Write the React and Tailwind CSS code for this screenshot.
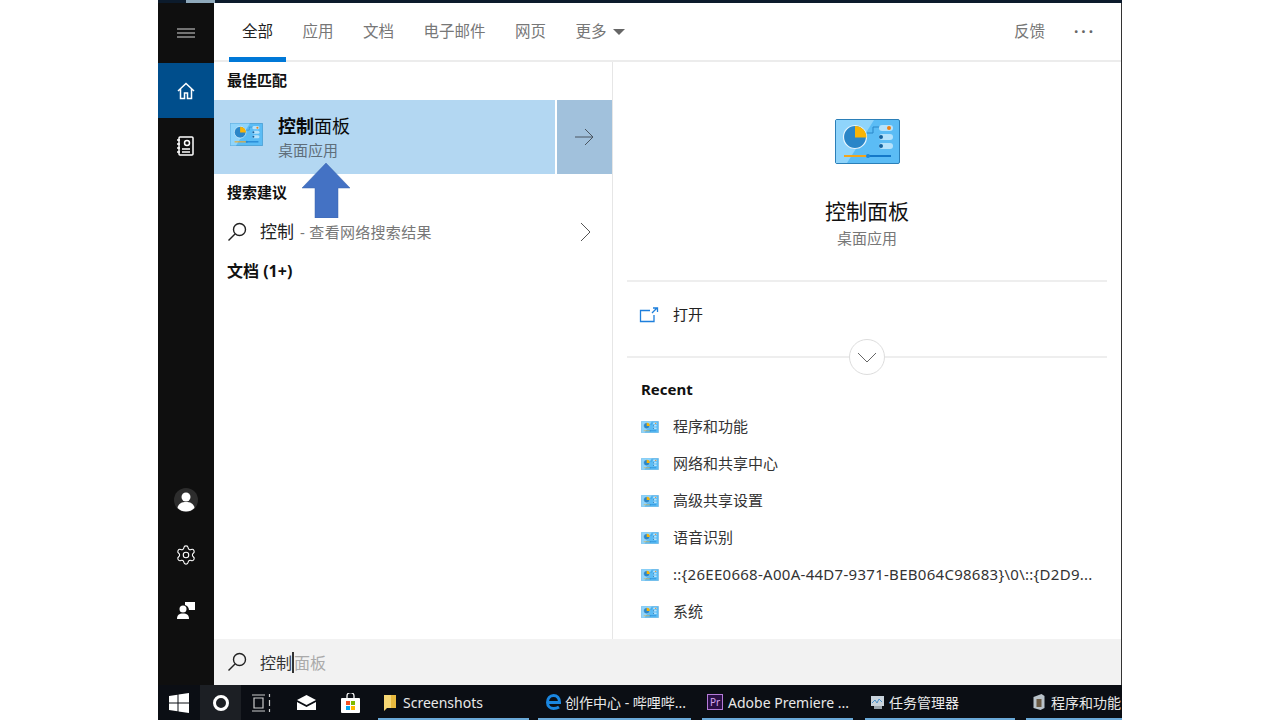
import { Settings } from "lucide-react";

const FONT = "[font-family:'Noto_Sans','Noto_Sans_CJK_SC',sans-serif]";

const tabs = ["全部", "应用", "文档", "电子邮件", "网页"];

const recent = [
  "程序和功能",
  "网络和共享中心",
  "高级共享设置",
  "语音识别",
  "::{26EE0668-A00A-44D7-9371-BEB064C98683}\\0\\::{D2D9...",
  "系统",
];

function PanelIcon({ className }) {
  return (
    <svg className={className} viewBox="0 0 65 45">
      <rect x="0.5" y="0.5" width="64" height="44" rx="1.5" fill="#5bbcf5" stroke="#2b7fb8" />
      <path d="M1 1h38L12 44H1z" fill="#8fd4fb" />
      <circle cx="20" cy="18" r="11.5" fill="#2a86c8" stroke="#e6f5fd" strokeWidth="1.2" />
      <path d="M20 7a11.5 11.5 0 0 1 11.5 11.5H20z" fill="#f8b406" />
      <path d="M32 14h6v-6h7" fill="none" stroke="#2a86c8" />
      <rect x="44" y="6" width="14" height="6" rx="3" fill="#b6e2fb" />
      <rect x="44" y="15" width="14" height="6" rx="3" fill="#b6e2fb" />
      <rect x="44" y="24" width="14" height="6" rx="3" fill="#b6e2fb" />
      <circle cx="54" cy="9" r="2" fill="#f07f12" />
      <circle cx="46" cy="18" r="2" fill="#14609c" />
      <circle cx="46" cy="27" r="2" fill="#14609c" />
      <rect x="9" y="36" width="24" height="2" fill="#f2a51c" />
      <rect x="33" y="36" width="23" height="2" fill="#1478c8" />
      <circle cx="33" cy="37" r="2" fill="#1f8ad8" />
    </svg>
  );
}

function SearchIcon() {
  return (
    <svg className="w-[20px] h-[20px] text-[#222]" viewBox="0 0 20 20" fill="none" stroke="currentColor" strokeWidth="1.4">
      <circle cx="12.5" cy="7.5" r="6" />
      <path d="M8 12 1.5 18.5" />
    </svg>
  );
}

function TaskItem({ width, icon, label, gap }) {
  return (
    <div className={`${width} ${gap} h-full flex items-center pl-[5px] pt-[1px] border-b-2 border-[#6aa9d8] text-[14px] text-[#e8e8e8] whitespace-nowrap overflow-hidden`}>
      {icon}
      <span>{label}</span>
    </div>
  );
}

export default function App() {
  return (
    <div className={`w-[1280px] h-[720px] overflow-hidden bg-white pl-[158px] ${FONT}`}>
      <div className="relative w-[964px] h-full flex flex-col">
        {/* desktop peeking out above the start menu */}
        <div className="h-[3px] bg-[#0c1b2c] shrink-0 pl-[28px]">
          <div className="w-[29px] h-full bg-[#8fa9bb]"></div>
        </div>

        <div className="flex-1 flex min-h-0">
          <div className="w-[56px] bg-[#0f0f0f] flex flex-col text-white shrink-0 pb-[47px]">
            <div className="h-[60px] flex items-center justify-center">
              <svg className="w-[20px] h-[10px] text-[#d8d8d8]" viewBox="0 0 20 10" fill="none" stroke="currentColor" strokeWidth="1">
                <path d="M1 1h18M1 5h18M1 9h18" />
              </svg>
            </div>
            <div className="h-[55px] bg-[#004e8c] flex items-center justify-center">
              <svg className="w-[18px] h-[18px]" viewBox="0 0 18 18" fill="none" stroke="currentColor" strokeWidth="1.5">
                <path d="M1 9 9 1.500 17 9M3.500 7v9.500h4V11h3v5.500h4V7" />
              </svg>
            </div>
            <div className="h-[55px] flex items-center justify-center">
              <svg className="w-[18px] h-[20px]" viewBox="0 0 18 20" fill="none" stroke="currentColor" strokeWidth="1.5">
                <rect x="2" y="1" width="14" height="18" rx="1" />
                <circle cx="10" cy="7" r="2.500" />
                <path d="M5 13h8M5 16h8M0 4h3M0 8h3M0 12h3M0 16h3" />
              </svg>
            </div>
            <div className="flex-1"></div>
            <div className="h-[55px] flex items-center justify-center">
              <svg className="w-[24px] h-[24px]" viewBox="0 0 24 24">
                <circle cx="12" cy="12" r="12" fill="#2d2d2d" />
                <circle cx="12" cy="9" r="4.500" fill="#fff" />
                <path d="M3.500 20c1-5 4.500-6 8.500-6s7.500 1 8.500 6a12 12 0 0 1-17 0z" fill="#fff" />
              </svg>
            </div>
            <div className="h-[56px] flex items-center justify-center">
              <Settings className="w-[22px] h-[22px]" strokeWidth={1.2} />
            </div>
            <div className="h-[55px] pb-[2px] flex items-center justify-center">
              <svg className="w-[18px] h-[18px]" viewBox="0 0 18 18" fill="#fff">
                <circle cx="6" cy="8" r="3.500" />
                <path d="M0 18c0-4 2-5.500 6-5.500s6 1.500 6 5.500z" />
                <path d="M8 1h10v8h-3l-3 0a6 6 0 0 0-4-5z" />
              </svg>
            </div>
          </div>

          <div className="flex-1 flex flex-col min-w-0 border-r border-[#333]">
            <div className="h-[59px] shrink-0 flex items-stretch border-b-2 border-[#ececec] pl-[15px] pr-[25px] text-[15.500px] text-[#777]">
              {tabs.map((tab, i) => (
                <div
                  key={tab}
                  className={`px-[13px] -mb-[2px] pt-[17px] mr-[3.500px] border-b-[5px] ${i === 0 ? "border-[#0078d7] text-[#222]" : "border-transparent"}`}
                >
                  {tab}
                </div>
              ))}
              <div className="pl-[13px] pt-[17px] flex items-start gap-[6px]">
                更多
                <span className="mt-[9px] border-x-[6px] border-t-[6px] border-x-transparent border-t-[#666]"></span>
              </div>
              <div className="flex-1"></div>
              <div className="pt-[17px] mr-[29px]">反馈</div>
              <div className="pt-[17px] tracking-[3px] text-[#666] font-bold">···</div>
            </div>

            <div className="flex-1 flex min-h-0">
              <div className="w-[399px] shrink-0 border-r border-[#e6e6e6] flex flex-col">
                <div className="h-[38px] pl-[13px] pt-[7px] text-[15px] font-bold text-[#111]">最佳匹配</div>
                <div className="h-[74px] flex">
                  <div className="w-[341px] bg-[#b3d7f2] flex">
                    <PanelIcon className="w-[33px] h-[23px] ml-[16px] mt-[23px]" />
                    <div className="ml-[15px] pt-[12px]">
                      <div className="text-[18px] leading-[28px] text-[#0a0a0a]">
                        <span className="font-bold">控制</span>面板
                      </div>
                      <div className="text-[15px] leading-[21px] text-[#5f6e7a]">桌面应用</div>
                    </div>
                  </div>
                  <div className="w-[2px]"></div>
                  <div className="flex-1 bg-[#a1c1dc] flex items-center justify-center pr-[2px] text-[#4a5560]">
                    <svg className="w-[20px] h-[18px]" viewBox="0 0 20 18" fill="none" stroke="currentColor" strokeWidth="1">
                      <path d="M1 9h18M11 1l8 8-8 8" />
                    </svg>
                  </div>
                </div>
                <div className="h-[38px] pl-[13px] pt-[7px] text-[15px] font-bold text-[#111]">搜索建议</div>
                <div className="h-[40px] flex items-center pl-[13px] pr-[21px]">
                  <SearchIcon />
                  <span className="ml-[13px] text-[17px] text-[#222]">控制</span>
                  <span className="ml-[6px] text-[15px] text-[#777] tracking-[0.3px]">- 查看网络搜索结果</span>
                  <svg className="ml-auto w-[11px] h-[20px] text-[#555]" viewBox="0 0 11 20" fill="none" stroke="currentColor" strokeWidth="1">
                    <path d="M1 1l9 9-9 9" />
                  </svg>
                </div>
                <div className="pl-[13px] pt-[7px] text-[16px] font-bold text-[#111]">文档 (1+)</div>
              </div>

              <div className="flex-1 min-w-0 px-[14px] flex flex-col">
                <div className="h-[220px] shrink-0 border-b-2 border-[#eeeeee] flex flex-col items-center">
                  <PanelIcon className="w-[65px] h-[45px] mt-[57px]" />
                  <div className="mt-[31px] text-[21px] leading-[32px] text-[#111]">控制面板</div>
                  <div className="text-[15px] leading-[22px] text-[#777]">桌面应用</div>
                </div>
                <div className="relative h-[76px] shrink-0 border-b-2 border-[#eeeeee] flex items-center pl-[12px] pb-[9px] text-[15px] text-[#222]">
                  <svg className="w-[20px] h-[16px] text-[#1e7fdc]" viewBox="0 0 20 16" fill="none" stroke="currentColor" strokeWidth="1.300">
                    <path d="M11 3.500H1.500v11H15V8M13 6l5-5M14 1h4.500v4" />
                  </svg>
                  <span className="ml-[14px]">打开</span>
                  <div className="absolute left-[222px] top-[57px] w-[36px] h-[36px] rounded-full bg-white border border-[#dddddd] flex items-center justify-center text-[#666]">
                    <svg className="w-[20px] h-[11px]" viewBox="0 0 20 11" fill="none" stroke="currentColor" strokeWidth="1">
                      <path d="M1 1l9 9 9-9" />
                    </svg>
                  </div>
                </div>
                <div className="pl-[14px] pt-[20px] text-[15px] leading-[22px] font-bold text-[#111]">Recent</div>
                <div className="pl-[14px] pt-[8px] flex flex-col">
                  {recent.map((item) => (
                    <div key={item} className="h-[37px] flex items-center text-[15px] text-[#333] whitespace-nowrap">
                      <PanelIcon className="w-[18px] h-[12px] shrink-0" />
                      <span className={`ml-[14px] ${item.startsWith("::") ? "tracking-[0.28px]" : ""}`}>{item}</span>
                    </div>
                  ))}
                </div>
              </div>
            </div>

            <div className="h-[46px] shrink-0 bg-[#f2f2f2] flex items-center pl-[13px]">
              <SearchIcon />
              <span className="ml-[13px] pt-[1px] text-[16px] text-[#333]">控制</span>
              <span className="w-[2px] h-[21px] bg-[#333]"></span>
              <span className="pt-[1px] text-[16px] text-[#aaaaaa]">面板</span>
            </div>
          </div>
        </div>

        <div className="h-[35px] shrink-0 bg-[#0b0e14] flex items-stretch">
          <div className="w-[42px] flex items-center justify-center">
            <svg className="w-[20px] h-[20px]" viewBox="0 0 20 20" fill="#fff">
              <path d="M0 3l8.500-1.200v7.700H0zM9.500 1.600 20 0v9.500H9.500zM0 10.500h8.500v7.700L0 17zM9.500 10.500H20V20L9.500 18.400z" />
            </svg>
          </div>
          <div className="w-[41px] bg-[#1c1f24] flex items-center justify-center">
            <span className="w-[16px] h-[16px] rounded-full border-[3px] border-white"></span>
          </div>
          <div className="w-[42px] flex items-center justify-center">
            <svg className="w-[20px] h-[18px] text-[#ccc]" viewBox="0 0 20 18" fill="none" stroke="currentColor" strokeWidth="1.200">
              <path d="M0 1h13M0 17h13M2 4h9v10H2zM17.500 0v3M17.500 6v6M17.500 15v3" />
            </svg>
          </div>
          <div className="w-[46px] flex items-center justify-center">
            <svg className="w-[19px] h-[15px]" viewBox="0 0 19 15" fill="#fff">
              <path d="M0 5 9.500 0 19 5l-9.500 5z" />
              <path d="M0 7l9.500 5L19 7v8H0z" />
            </svg>
          </div>
          <div className="w-[42px] flex items-center justify-center">
            <svg className="w-[19px] h-[20px]" viewBox="0 0 19 20">
              <path d="M6 5V3a3.500 3.500 0 0 1 7 0v2" fill="none" stroke="#fff" strokeWidth="1.300" />
              <rect x="0" y="5" width="19" height="15" rx="1" fill="#fff" />
              <rect x="5" y="8" width="4" height="4" fill="#f25022" />
              <rect x="10" y="8" width="4" height="4" fill="#7fba00" />
              <rect x="5" y="13" width="4" height="4" fill="#00a4ef" />
              <rect x="10" y="13" width="4" height="4" fill="#ffb900" />
            </svg>
          </div>
          <div className="w-[7px]"></div>
          <TaskItem
            width="w-[151px]"
            gap="gap-[7px]"
            label="Screenshots"
            icon={
              <svg className="w-[12px] h-[17px] shrink-0 ml-[1px]" viewBox="0 0 12 17">
                <path d="M0 1h12v13H3l-3 3z" fill="#f6d774" />
                <path d="M7 1h5v13H7z" fill="#e8b93e" />
              </svg>
            }
          />
          <div className="w-[9px]"></div>
          <TaskItem
            width="w-[153px]"
            gap="gap-[4px]"
            label="创作中心 - 哔哩哔..."
            icon={
              <svg className="w-[15px] h-[16px] shrink-0 ml-[3px]" viewBox="0 0 15 16" fill="none" stroke="#1a86e0" strokeWidth="3">
                <path d="M2 8.500h11.500C13.500 4 11 1.500 7.500 1.500S1.500 4.500 1.500 8.500s3 6 6 6c2 0 4-.5 5.500-1.500" />
              </svg>
            }
          />
          <div className="w-[11px]"></div>
          <TaskItem
            width="w-[151px]"
            gap="gap-[5px]"
            label="Adobe Premiere ..."
            icon={
              <span className="w-[16px] h-[16px] shrink-0 border border-[#b57ad8] bg-[#2a0f45] text-[#d7a6f0] text-[10px] leading-[14px] text-center">Pr</span>
            }
          />
          <div className="w-[12px]"></div>
          <TaskItem
            width="w-[150px]"
            gap="gap-[4px]"
            label="任务管理器"
            icon={
              <svg className="w-[15px] h-[15px] shrink-0" viewBox="0 0 15 15">
                <rect x="1" y="1" width="13" height="10" fill="#c9d3dc" />
                <path d="M2 8l3-3 2 3 2-4 3 3" fill="none" stroke="#4a90c8" />
                <rect x="4" y="11" width="8" height="3" fill="#9aa5ae" />
              </svg>
            }
          />
          <div className="w-[11px]"></div>
          <TaskItem
            width="flex-1 min-w-0"
            gap="gap-[5px]"
            label="程序和功能"
            icon={
              <svg className="w-[14px] h-[16px] shrink-0 ml-[1px]" viewBox="0 0 13 16">
                <path d="M1 3l8-3 3 2v12l-4 2-7-2z" fill="#b9c2c9" />
                <rect x="4" y="5" width="5" height="8" fill="#6b5a44" />
              </svg>
            }
          />
        </div>

        {/* annotation arrow pointing at the best match */}
        <svg className="absolute left-[144px] top-[163px] w-[48px] h-[55px]" viewBox="0 0 48 55">
          <path d="M24 0 48 25H36V55H13V25H0z" fill="#4472c4" stroke="#3a64ae" strokeWidth="0.500" />
        </svg>
      </div>
    </div>
  );
}
